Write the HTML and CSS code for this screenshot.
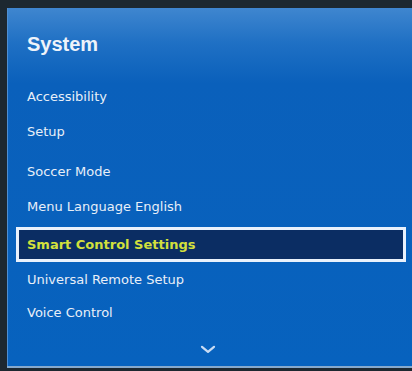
FILE: index.html
```html
<!DOCTYPE html>
<html lang="en">
<head>
    <meta charset="UTF-8">
    <meta name="viewport" content="width=device-width, initial-scale=1.0">
    <title>System</title>
    <link rel="stylesheet" href="styles.css">
</head>
<body>
    <div class="panel">
        <h1 class="panel-title">System</h1>

        <ul class="menu">
            <li class="item">Accessibility</li>
            <li class="item">Setup</li>
            <li class="item item-gap">Soccer Mode</li>
            <li class="item">Menu Language English</li>
            <li class="item selected">Smart Control Settings</li>
            <li class="item item-short">Universal Remote Setup</li>
            <li class="item">Voice Control</li>
        </ul>

        <div class="more">
            <svg width="16" height="9" viewBox="0 0 16 9">
                <path d="M2 1.8 L8 6.8 L14 1.8" fill="none" stroke="#c9dcf4" stroke-width="2.2" stroke-linecap="round" stroke-linejoin="round"/>
            </svg>
        </div>
    </div>
    <div class="floor"></div>
</body>
</html>
```

FILE: styles.css
```css
html, body {
    margin: 0;
    padding: 0;
}

body {
    width: 412px;
    height: 371px;
    overflow: hidden;
    background: #1d2830;
    font-family: "DejaVu Sans", sans-serif;
    padding-top: 8px;
    padding-left: 7px;
    box-sizing: border-box;
}

.panel {
    height: 358px;
    background: linear-gradient(180deg, #3f86cf 0px, #1f70c4 35px, #0a60bb 75px, #0762be 100%);
    border-left: 1px solid #4f8fd2;
    box-sizing: border-box;
    display: flex;
    flex-direction: column;
}

.panel-title {
    margin: 0;
    padding: 24px 0 23px 19px;
    font-family: "Liberation Sans", Arial, sans-serif;
    font-size: 20px;
    font-weight: bold;
    line-height: 24px;
    color: #eef3fa;
}

.menu {
    list-style: none;
    margin: 0;
    padding: 0;
}

.item {
    height: 35px;
    line-height: 35px;
    padding-left: 19px;
    font-size: 13px;
    color: #e8eff8;
}

.item-gap {
    margin-top: 5px;
}

.item-short {
    height: 33px;
    line-height: 35px;
}

.selected {
    margin: 3px 6px 0 8px;
    height: 35px;
    line-height: 30px;
    padding-left: 8px;
    border: 3px solid #e9f1fc;
    box-sizing: border-box;
    background: #0b2d63;
    color: #d3e03c;
    font-weight: bold;
}

.more {
    flex: 1;
    display: flex;
    align-items: center;
    justify-content: center;
    padding-right: 4px;
    padding-top: 2px;
}

.floor {
    height: 2px;
    background: #86a9cc;
}
```
